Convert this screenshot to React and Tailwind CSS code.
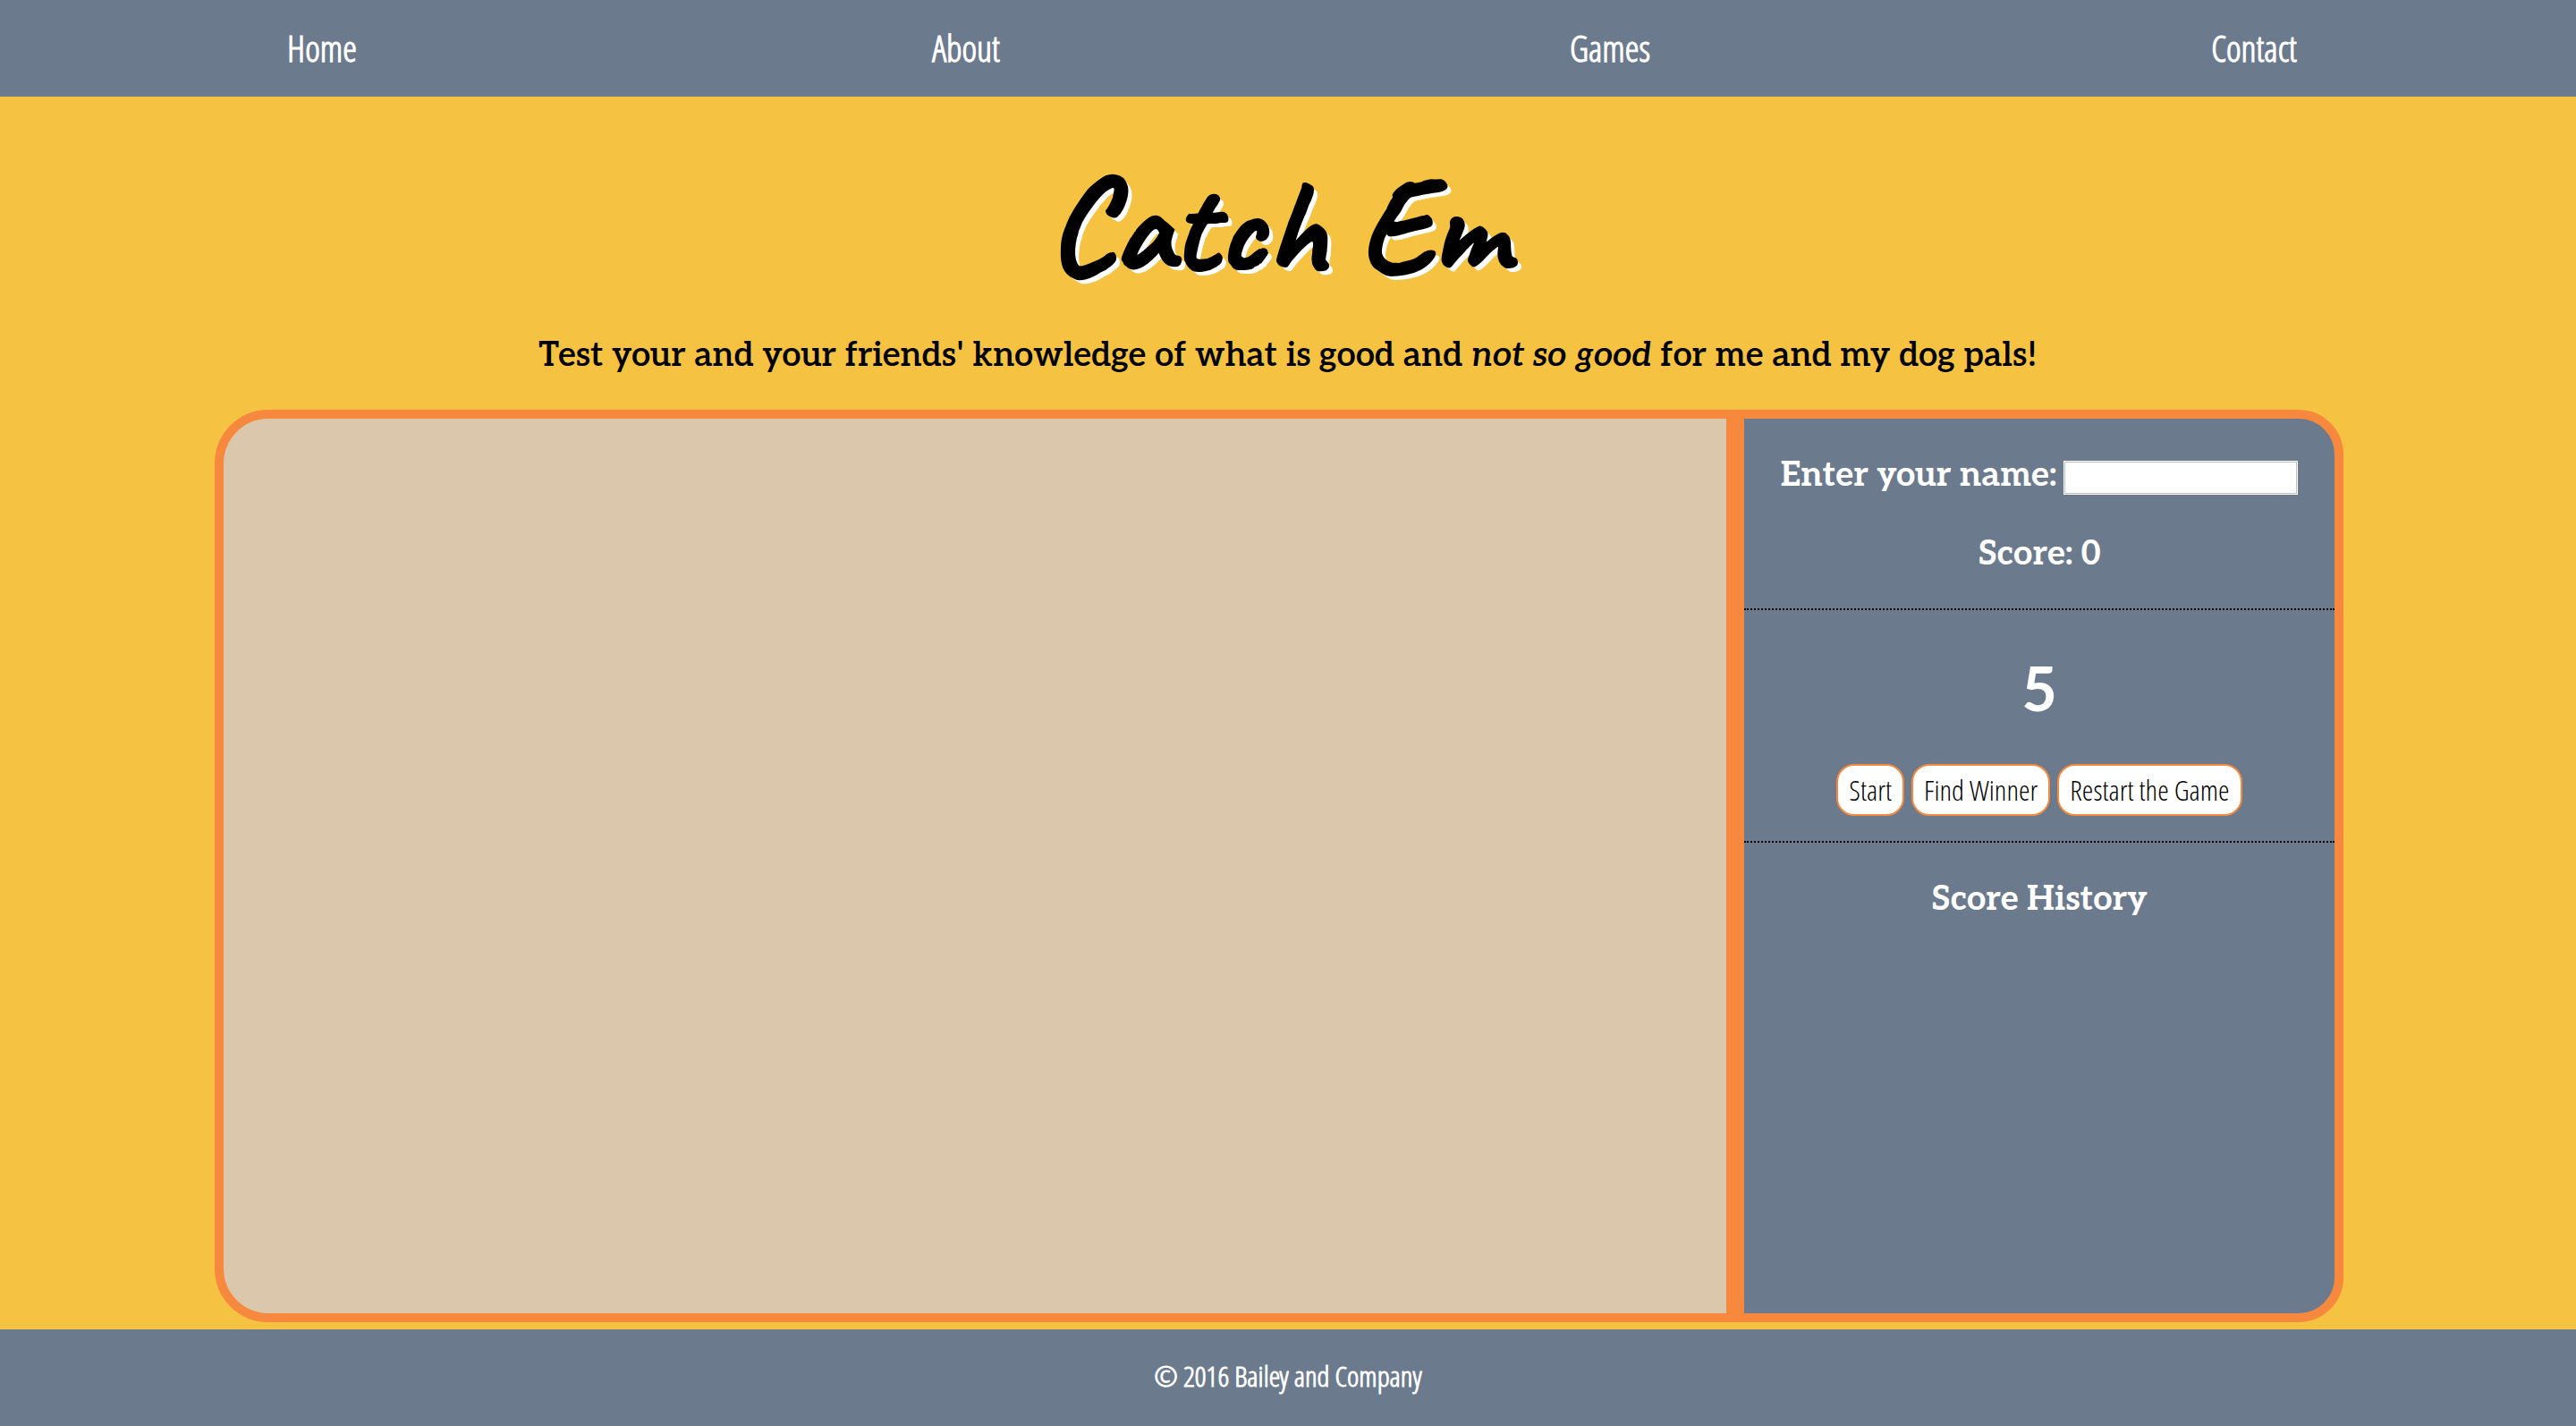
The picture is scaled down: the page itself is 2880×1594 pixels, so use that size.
const navItems = ['Home', 'About', 'Games', 'Contact'];
const actions = ['Start', 'Find Winner', 'Restart the Game'];

const condensed = 'font-["Open_Sans_Condensed_Light","Open_Sans_Condensed","Open_Sans",sans-serif]';
const slab = 'font-["Roboto_Slab","Aleo","Liberation_Serif",serif]';
const script = 'font-["Homemade_Apple","Caveat",cursive]';

function Nav() {
  return (
    <nav className={`${condensed} bg-[#6c7a8d] text-white`}>
      <ul className="flex h-[108px] items-center">
        {navItems.map((item) => (
          <li key={item} className="flex-1 text-center text-[40px] leading-[56px] font-bold">
            <a href={`#${item.toLowerCase()}`}>{item}</a>
          </li>
        ))}
      </ul>
    </nav>
  );
}

function Sidebar() {
  return (
    <aside className="flex flex-col rounded-r-[50px] border-10 border-[#f6893d] bg-[#6c7a8d] text-center text-[38px] leading-[48px] font-bold text-white">
      <section className="border-b-2 border-dotted border-black pt-10 pb-9">
        <div className="flex items-center justify-center gap-2">
          <label htmlFor="player">Enter your name:</label>
          <input
            id="player"
            type="text"
            className="mt-1 h-[38px] w-[262px] border border-white bg-white px-1 text-2xl font-normal text-black ring-1 ring-[#c0bdc4] ring-inset outline-none"
          />
        </div>
        <p className="mt-10">Score: 0</p>
      </section>
      <section className="border-b-2 border-dotted border-black pt-[52px] pb-7">
        <p className="text-[68px] leading-[80px]">5</p>
        <div className={`${condensed} mt-10 flex justify-center gap-2 text-[32px] leading-[46px] font-light text-black`}>
          {actions.map((label) => (
            <button key={label} type="button" className="rounded-[20px] border-2 border-[#f6893d] bg-white px-3 py-1">
              {label}
            </button>
          ))}
        </div>
      </section>
      <section className="pt-10">
        <h2>Score History</h2>
      </section>
    </aside>
  );
}

export default function App() {
  return (
    <div className={`${slab} flex min-h-screen flex-col bg-[#f5c242] text-black`}>
      <Nav />
      <main className="flex flex-1 flex-col pr-[260px] pb-2 pl-60">
        <header className="pt-10 pb-9 pl-5 text-center">
          <h1 className={`${script} pr-6 pb-4 text-[150px] leading-[210px] font-bold [-webkit-text-stroke:2px_black] [text-shadow:5px_5px_white]`}>
            Catch Em
          </h1>
          <p className="text-[38px] leading-[48px] font-semibold">
            Test your and your friends' knowledge of what is good and <em>not so good</em> for me and my dog pals!
          </p>
        </header>
        <div className="grid flex-1 grid-cols-[5fr_2fr]">
          <section aria-label="Game board" className="rounded-l-[60px] border-10 border-[#f6893d] bg-[#dbc7ac]" />
          <Sidebar />
        </div>
      </main>
      <footer className={`${condensed} flex h-[108px] items-center justify-center bg-[#6c7a8d] pb-1 text-[32px] leading-[44px] font-light text-white [-webkit-text-stroke:1px_white]`}>
        <p>© 2016 Bailey and Company</p>
      </footer>
    </div>
  );
}
